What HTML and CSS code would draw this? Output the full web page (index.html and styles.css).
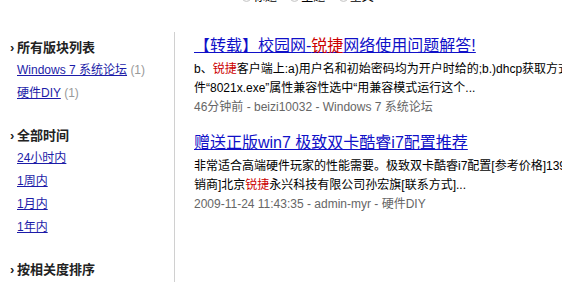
FILE: index.html
```html
<!DOCTYPE html>
<html lang="zh-CN">
<head>
  <meta charset="UTF-8">
  <title>搜索结果</title>
  <link rel="stylesheet" href="styles.css">
</head>
<body>
  <div class="search-opts">
    <label><input type="radio" name="scope">标题</label>
    <label><input type="radio" name="scope">主题</label>
    <label><input type="radio" name="scope">全文</label>
  </div>

  <div class="main">
    <div class="side">
      <div class="section">
        <h3>所有版块列表</h3>
        <a href="#">Windows 7 系统论坛</a> <span class="count">(1)</span><br>
        <a href="#">硬件DIY</a> <span class="count">(1)</span>
      </div>
      <div class="section">
        <h3>全部时间</h3>
        <a href="#">24小时内</a><br>
        <a href="#">1周内</a><br>
        <a href="#">1月内</a><br>
        <a href="#">1年内</a>
      </div>
      <div class="section">
        <h3>按相关度排序</h3>
      </div>
    </div>

    <div class="results">
      <div class="result">
        <a class="title" href="#">【转载】校园网-<em>锐捷</em>网络使用问题解答!</a>
        <p class="snippet">b、<em>锐捷</em>客户端上:a)用户名和初始密码均为开户时给的;b.)dhcp获取方式;c.)右击客户端程序文<br>件“8021x.exe”属性兼容性选中“用兼容模式运行这个...</p>
        <p class="meta">46分钟前 - beizi10032 - Windows 7 系统论坛</p>
      </div>
      <div class="result">
        <a class="title" href="#">赠送正版win7 极致双卡酷睿i7配置推荐</a>
        <p class="snippet">非常适合高端硬件玩家的性能需要。极致双卡酷睿i7配置[参考价格]13999元[经<br>销商]北京<em>锐捷</em>永兴科技有限公司孙宏旗[联系方式]...</p>
        <p class="meta">2009-11-24 11:43:35 - admin-myr - 硬件DIY</p>
      </div>
    </div>
  </div>
</body>
</html>
```

FILE: styles.css
```css
body {
  margin: 0;
  font-family: 'Liberation Sans', 'Noto Sans CJK SC', sans-serif;
  font-size: 12px;
  color: #000;
  background: #fff;
  overflow: hidden;
}

a {
  color: #1c1ca8;
}

em {
  font-style: normal;
  color: #c00;
}

.search-opts {
  height: 12px;
  margin-top: -10px;
  padding-left: 242px;
  line-height: 14px;
  color: #000;
}

.search-opts label {
  margin-right: 10px;
}

.search-opts input {
  -webkit-appearance: none;
  appearance: none;
  width: 9px;
  height: 9px;
  margin: 0 2px 0 0;
  border: 1px solid #c8c8c8;
  border-radius: 50%;
  background: #f4f4f4;
  vertical-align: middle;
}

.main {
  display: flex;
  margin-top: 30px;
}

/* left column */
.side {
  width: 174px;
  flex-shrink: 0;
  border-right: 1px solid #d0d0d0;
  padding-top: 4px;
  padding-bottom: 30px;
}

.section {
  padding-left: 17px;
  line-height: 23px;
  margin-bottom: 19px;
}

.section h3 {
  margin: 0;
  font-size: 13px;
  font-weight: bold;
  color: #222;
}

.section h3::before {
  content: "›";
  display: inline-block;
  width: 7px;
  margin-left: -7px;
  font-weight: bold;
}

.count {
  color: #999;
}

/* results */
.results {
  padding: 2px 0 0 19px;
  flex: 1;
  white-space: nowrap;
  overflow: hidden;
}

.result {
  margin-bottom: 14px;
}

.title {
  font-size: 16px;
  line-height: 24px;
  color: #1010c8;
}

.snippet {
  margin: 2px 0 0;
  line-height: 19px;
}

.meta {
  margin: 0;
  line-height: 19px;
  color: #666;
}
```
